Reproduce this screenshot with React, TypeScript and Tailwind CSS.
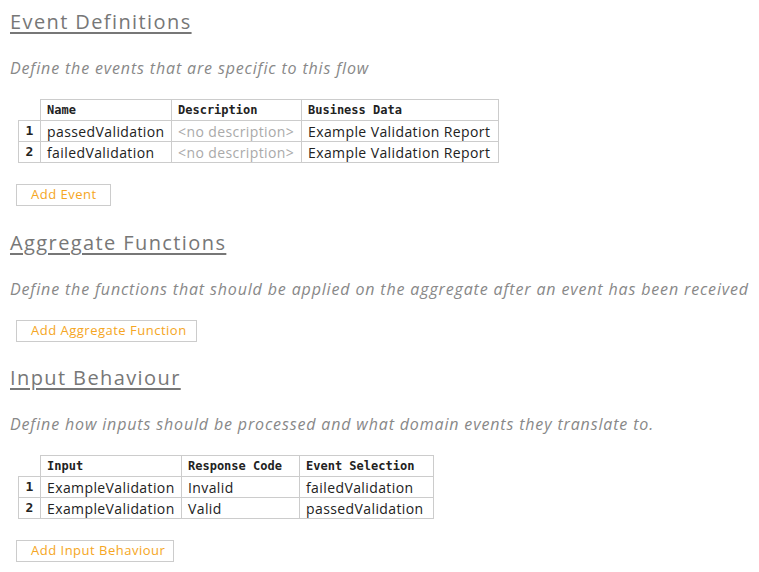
const sans = { fontFamily: '"Open Sans", "Noto Sans", sans-serif' };
const mono = { fontFamily: '"DejaVu Sans Mono", monospace' };

type Row = string[];

function Heading({ children }: { children: string }) {
  return (
    <h2
      className="text-[20px] leading-[24px] font-medium text-[#777] underline underline-offset-[3px] decoration-[1.5px] tracking-[1.4px]"
      style={sans}
    >
      {children}
    </h2>
  );
}

function Subtitle({ children }: { children: string }) {
  return (
    <p className="mt-[24px] text-[16px] leading-[20px] italic text-[#888] tracking-[0.85px]" style={sans}>
      {children}
    </p>
  );
}

function AddButton({ label, width }: { label: string; width: string }) {
  return (
    <div className="flex">
      <button
        className={`ml-[6px] h-[22px] border border-[#ccc] bg-white text-[13px] text-[#f5a623] text-left pl-[14px] tracking-[0.5px] ${width}`}
        style={sans}
      >
        {label}
      </button>
    </div>
  );
}

function DataTable({ headers, widths, rows, mutedCol }: { headers: string[]; widths: string[]; rows: Row[]; mutedCol?: number }) {
  return (
    <table className="ml-[8px] border-collapse">
      <thead>
        <tr className="h-[21px]">
          <th className="w-[22px] p-0"></th>
          {headers.map((h, i) => (
            <th
              key={h}
              className={`border border-[#ccc] px-[6px] text-left font-bold text-[12px] text-[#222] ${widths[i]}`}
              style={mono}
            >
              {h}
            </th>
          ))}
        </tr>
      </thead>
      <tbody>
        {rows.map((r, ri) => (
          <tr key={ri} className="h-[21px]">
            <td className="border border-[#ccc] text-center font-bold text-[13px] text-[#222]" style={mono}>
              {ri + 1}
            </td>
            {r.map((c, ci) => (
              <td
                key={ci}
                className={`border border-[#ccc] px-[6px] text-[14px] leading-[19px] tracking-[0.4px] whitespace-nowrap ${ci === mutedCol ? 'text-[#aaa]' : 'text-[#222]'}`}
                style={sans}
              >
                {c}
              </td>
            ))}
          </tr>
        ))}
      </tbody>
    </table>
  );
}

export default function App() {
  return (
    <div className="min-h-screen bg-white pl-[10px] pt-[10px]">
      <section>
        <Heading>Event Definitions</Heading>
        <Subtitle>Define the events that are specific to this flow</Subtitle>
        <div className="mt-[21px]">
          <DataTable
            headers={['Name', 'Description', 'Business Data']}
            widths={['w-[131px]', 'w-[130px]', 'w-[197px]']}
            rows={[
              ['passedValidation', '<no description>', 'Example Validation Report'],
              ['failedValidation', '<no description>', 'Example Validation Report'],
            ]}
            mutedCol={1}
          />
        </div>
        <div className="mt-[21px]">
          <AddButton label="Add Event" width="w-[95px]" />
        </div>
      </section>

      <section className="mt-[25px]">
        <Heading>Aggregate Functions</Heading>
        <Subtitle>Define the functions that should be applied on the aggregate after an event has been received</Subtitle>
        <div className="mt-[21px]">
          <AddButton label="Add Aggregate Function" width="w-[181px]" />
        </div>
      </section>

      <section className="mt-[24px]">
        <Heading>Input Behaviour</Heading>
        <Subtitle>Define how inputs should be processed and what domain events they translate to.</Subtitle>
        <div className="mt-[21px]">
          <DataTable
            headers={['Input', 'Response Code', 'Event Selection']}
            widths={['w-[141px]', 'w-[118px]', 'w-[134px]']}
            rows={[
              ['ExampleValidation', 'Invalid', 'failedValidation'],
              ['ExampleValidation', 'Valid', 'passedValidation'],
            ]}
          />
        </div>
        <div className="mt-[21px]">
          <AddButton label="Add Input Behaviour" width="w-[158px]" />
        </div>
      </section>
    </div>
  );
}
